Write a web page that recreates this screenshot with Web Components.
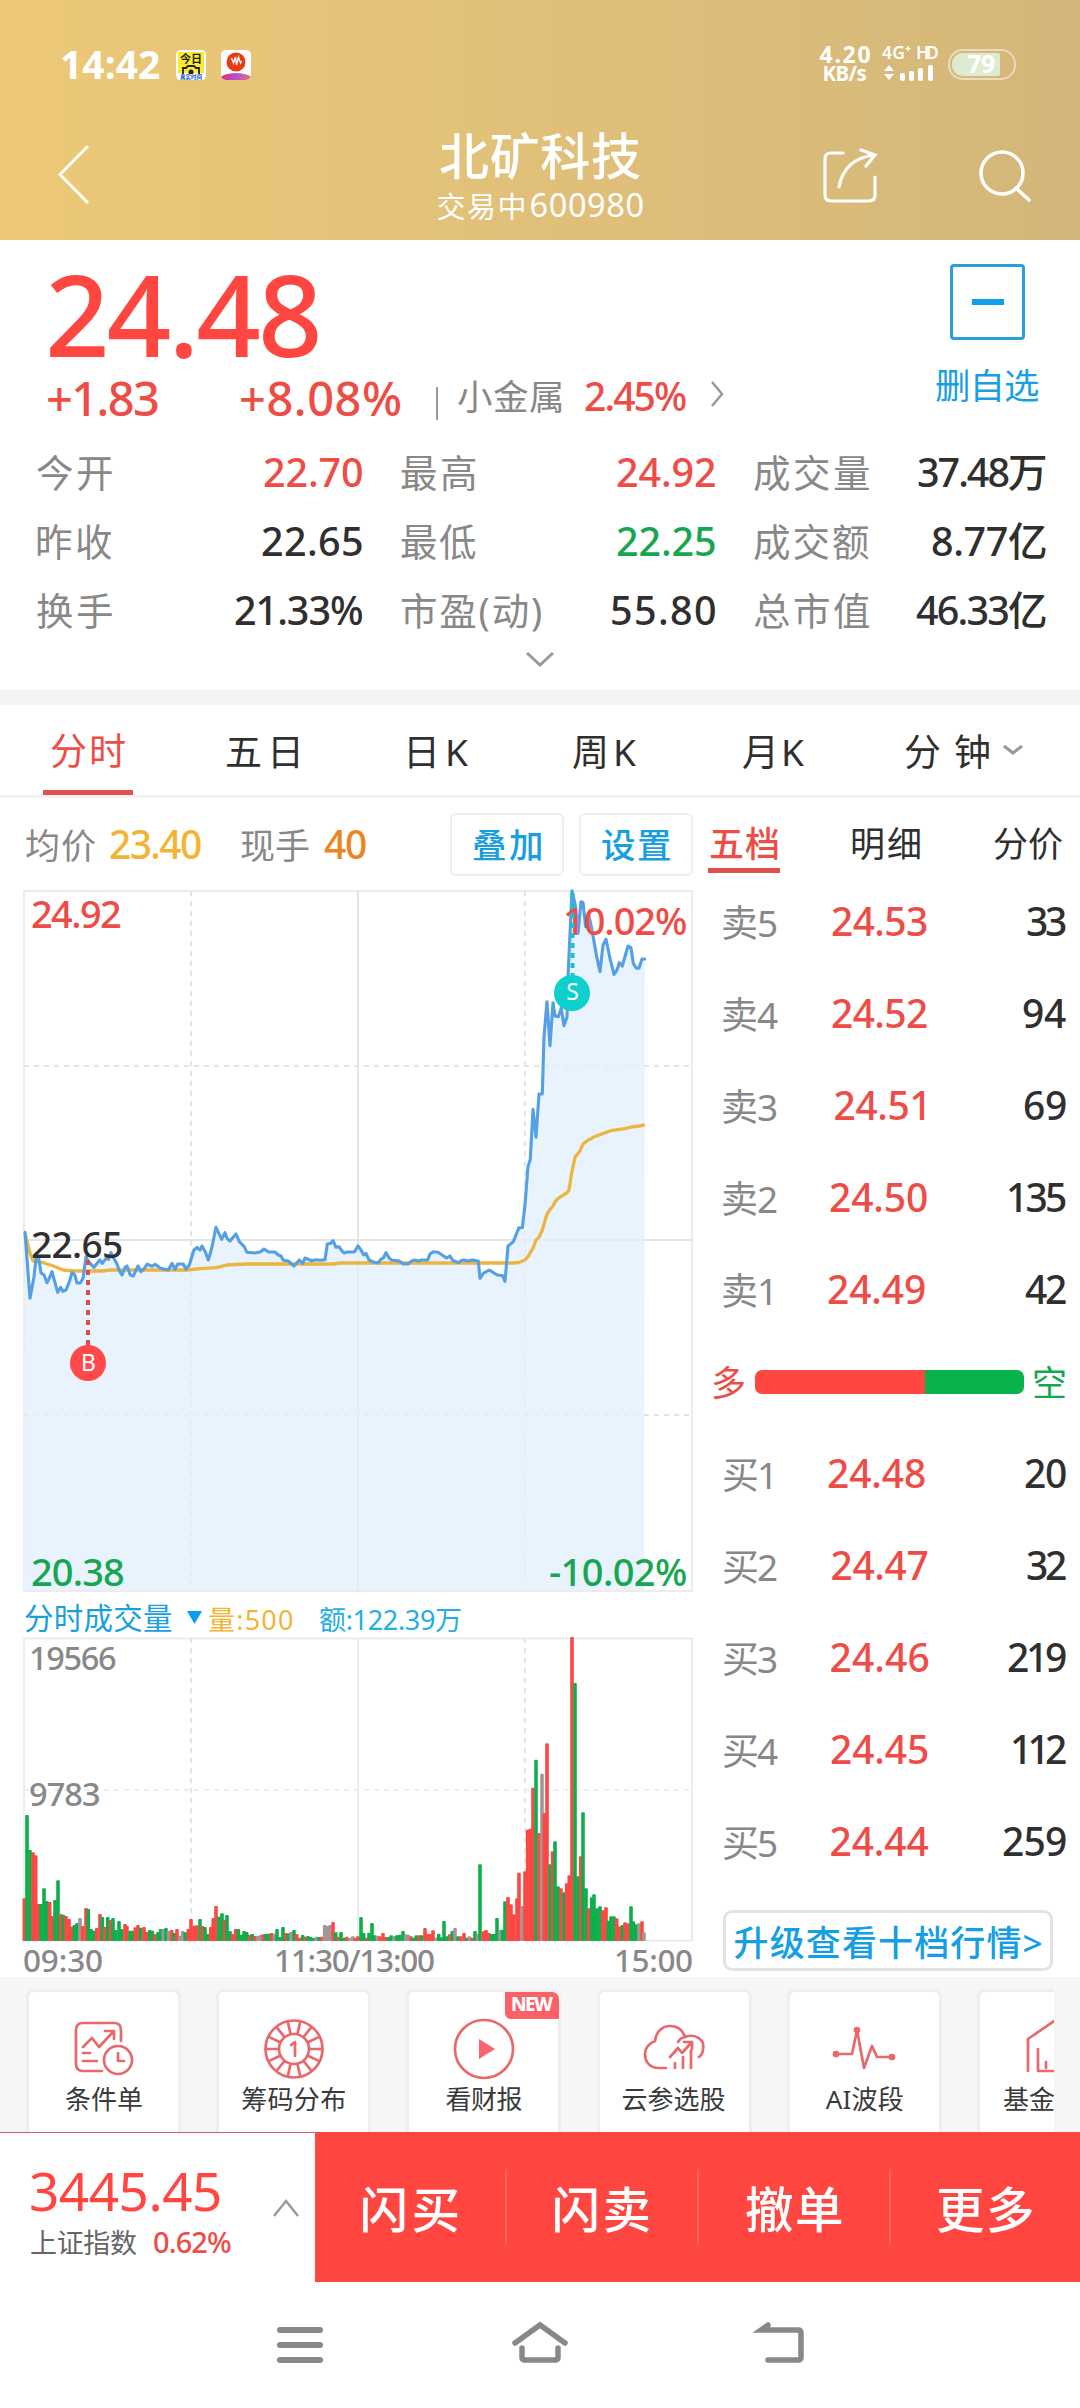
<!DOCTYPE html>
<html lang="zh-CN">
<head>
<meta charset="utf-8">
<title>北矿科技 600980</title>
<style>
html,body{margin:0;padding:0;background:#fff}
body{width:1080px;height:2408px;overflow:hidden;font-family:"Noto Sans","Noto Sans CJK SC",sans-serif}
</style>
</head>
<body>
<stock-page></stock-page>
<script>
const FONT='"Noto Sans","Noto Sans CJK SC",sans-serif';
const pen=document.createElement('canvas').getContext('2d');
const base=`*{box-sizing:border-box}svg{display:block;overflow:visible}.row{display:flex;align-items:center}.r{color:#ee4c46}.g{color:#17a650}.k{color:#2f2f2f}.y{color:#888}`;
function make(name,html){
  customElements.define(name,class extends HTMLElement{
    connectedCallback(){
      if(this.shadowRoot)return;
      const s=this.attachShadow({mode:'open'});
      s.innerHTML='<style>'+base+'</style>'+(typeof html==='function'?html(this):html);
    }
  });
}
/* One line of text whose inked width is w, at font size s and weight b. */
customElements.define('fit-text',class extends HTMLElement{
  connectedCallback(){
    if(this.shadowRoot)return;
    const t=this.textContent,n=[...t].length;
    const s=+this.getAttribute('s')||38,w=+this.getAttribute('w'),b=this.getAttribute('b')||(/^[+\-\d]/.test(t)?500:400);
    pen.font=`${b} ${s}px ${FONT}`;
    const m=pen.measureText(t),ink=m.actualBoundingBoxLeft+m.actualBoundingBoxRight;
    const ls=n>1?(w-ink)/(n-1):0;
    const up=/[\u4e00-\u9fff]/.test(t)?0:-.031*s;
    const ml=+this.getAttribute('ml')||0;
    this.attachShadow({mode:'open'}).innerHTML=`<style>:host{display:block;flex:none;width:${w}px;height:${s}px;margin-left:${ml}px;font:${b} ${s}px/${s}px ${FONT};white-space:pre}
    span{display:block;width:max-content;margin:${up}px 0 0 ${m.actualBoundingBoxLeft}px;letter-spacing:${ls}px}</style><span><slot></slot></span>`;
  }
});

make('status-bar',`<style>:host{display:flex;height:125px;padding:44px 64px 0 62px;color:#fff;align-items:flex-start}
.row{height:41px}.l{display:flex;gap:15px;margin-left:16px}.sp{flex:1}.net{display:flex;flex-direction:column;gap:0;width:52px;align-items:center}
.sig{width:57px;margin-left:10px;display:flex;flex-direction:column;gap:3px}
.bat{width:68px;height:31px;border:2px solid rgba(255,255,255,.5);border-radius:15px;margin-left:10px;padding:2px;display:flex}
.fill{flex:0 0 48px;border-radius:11px 2px 2px 11px;background:#dcebd1;display:flex;align-items:center;padding-left:15px}</style>
<div class="row"><fit-text s="39" w="98" b="700">14:42</fit-text>
<div class="l">
<svg width="30" height="30"><rect width="30" height="30" rx="5" fill="#fff"/><path d="M2 2h26v21H2z" fill="#ffe92e"/><text x="15" y="12.500" font-size="11" font-weight="700" text-anchor="middle" fill="#222" font-family="Noto Sans CJK SC">今日</text><path d="M7 24v-6h3l2-2h6l2 2h3v6" fill="none" stroke="#222" stroke-width="1.800"/><circle cx="15" cy="22" r="2.500" fill="#222"/><path d="M1 24h28v3q0 3-3 3H4q-3 0-3-3z" fill="#fff"/><text x="15" y="29" font-size="5.500" font-weight="700" text-anchor="middle" fill="#1959d1" font-family="Noto Sans CJK SC">真实时间</text></svg>
<svg width="30" height="30"><defs><linearGradient id="a" x2="1"><stop stop-color="#e8304f"/><stop offset=".5" stop-color="#b44ed8"/><stop offset="1" stop-color="#f0824a"/></linearGradient><clipPath id="c"><rect width="30" height="30" rx="5"/></clipPath></defs><g clip-path="url(#c)"><path fill="#fff" d="M0 0h30v30H0z"/><ellipse cx="15" cy="32" rx="19" ry="9" fill="url(#a)"/></g><circle cx="15" cy="12" r="9.500" fill="#e93a12"/><path d="M10.500 8l2 5 2-6 1 8 2-8 2 6 1-2" fill="none" stroke="#fff" stroke-width="1.400"/></svg>
</div></div><div class="sp"></div>
<div class="net"><fit-text s="23" w="51" b="700">4.20</fit-text><fit-text s="20.500" w="43" b="700" style="margin-top:-3px">KB/s</fit-text></div>
<div class="sig"><div class="row" style="height:17px;margin-top:1px"><fit-text s="17.500" w="29" b="600" ml="1">4G⁺</fit-text><fit-text s="17.500" w="21" b="600" ml="6">HD</fit-text></div>
<svg width="57" height="16" fill="#fff"><path d="M8 0l5 6H3zM8 15l5-6H3z"/><rect x="19" y="8" width="5" height="8" rx="2"/><rect x="28" y="6" width="5" height="10" rx="2"/><rect x="37" y="3" width="5" height="13" rx="2"/><rect x="47" y="0" width="5" height="16" rx="2"/></svg></div>
<div class="bat" style="margin-top:5px"><div class="fill"><fit-text s="25" w="28" b="700">79</fit-text></div></div>`);

make('title-bar',`<style>:host{display:grid;grid-template-columns:360px 1fr 360px;height:115px;color:#fff}
.mid{display:flex;flex-direction:column;align-items:center;padding-top:6px;gap:9px}.end{display:flex;padding:24px 0 0 102px;gap:103px}.beg{padding:20px 0 0 58px}</style>
<div class="beg"><svg width="32" height="60" fill="none" stroke="#fff" stroke-width="3"><path d="M30 1L2 29.500 30 58"/></svg></div>
<div class="mid"><fit-text s="50" w="200" b="500">北矿科技</fit-text><div class="row"><fit-text s="29" w="87">交易中</fit-text><fit-text s="32.500" w="112" ml="6" b="400">600980</fit-text></div></div>
<div class="end"><svg width="54" height="54" fill="none" stroke="#fff" stroke-width="3.200" stroke-linecap="round"><path d="M21 4H9Q3 4 3 10v36q0 6 6 6h38q6 0 6-6V28"/><path d="M17 38Q22 10 52 6M39 1l14 5-9 11"/></svg>
<svg width="54" height="54" fill="none" stroke="#fff" stroke-width="3.500" stroke-linecap="round"><circle cx="23" cy="24" r="21"/><path d="M37 39l13 12"/></svg></div>`);

make('stat-cell',e=>`<style>:host{display:flex;justify-content:space-between;align-items:center;height:69px}</style><fit-text class="y" s="37.500" w="${e.getAttribute('lw')}">${e.getAttribute('label')}</fit-text><fit-text class="${e.getAttribute('c')||'k'}" s="39.500" w="${e.getAttribute('vw')}" style="margin-top:${/[万亿]/.test(e.getAttribute('value'))?0:3}px">${e.getAttribute('value')}</fit-text>`);

make('quote-panel',`<style>:host{display:block;height:450px}.top{display:flex;justify-content:space-between;height:198px;padding:0 41px 0 48px}
.big{color:#ff4640;padding:20px 0 0 2px}.chg{height:54px}.fav{display:flex;flex-direction:column;align-items:center;color:#189fe0;padding-top:24px;width:103px;gap:28px}
.box{width:75px;height:76px;border:3px solid #2a9fda;border-radius:4px;display:grid;place-items:center}.box i{width:32px;height:6px;background:#12a0ea}
.stats{display:grid;grid-template-columns:325px 314px 292px;column-gap:39px;padding-left:37px}.more{margin:6px 0 0 526px}</style>
<div class="top"><div><div class="big"><fit-text s="113" w="268" b="500">24.48</fit-text></div>
<div class="row chg r"><fit-text s="47" w="110" style="margin-top:6px">+1.83</fit-text><fit-text s="47" w="159" ml="83" style="margin-top:6px">+8.08%</fit-text><div style="width:2px;height:33px;background:#999;margin:14px 20px 0 36px"></div><fit-text class="y" s="35.500" w="104">小金属</fit-text><fit-text s="39" w="101" ml="23">2.45%</fit-text>
<svg style="margin-left:24px;margin-top:-5px" width="14" height="26" fill="none" stroke="#999" stroke-width="2.500"><path d="M2 1l10 12L2 25"/></svg></div></div>
<div class="fav"><div class="box"><i></i></div><fit-text s="35.500" w="103">删自选</fit-text></div></div>
<div class="stats">
<stat-cell label="今开" lw="75" value="22.70" vw="98" c="r"></stat-cell><stat-cell label="最高" lw="75" value="24.92" vw="98" c="r"></stat-cell><stat-cell label="成交量" lw="115" value="37.48万" vw="128"></stat-cell>
<stat-cell label="昨收" lw="75" value="22.65" vw="100"></stat-cell><stat-cell label="最低" lw="75" value="22.25" vw="98" c="g"></stat-cell><stat-cell label="成交额" lw="115" value="8.77亿" vw="114"></stat-cell>
<stat-cell label="换手" lw="75" value="21.33%" vw="127"></stat-cell><stat-cell label="市盈(动)" lw="140" value="55.80" vw="103"></stat-cell><stat-cell label="总市值" lw="115" value="46.33亿" vw="130"></stat-cell></div>
<svg class="more" width="28" height="16" fill="none" stroke="#999" stroke-width="3"><path d="M1 2l13 12L27 2"/></svg>`);

make('period-tabs',`<style>:host{display:flex;align-items:center;height:108px;border-top:15px solid #f4f4f4;border-bottom:3px solid #f3f3f3;color:#2f2f2f}
.on{color:#ee4c46;width:90px;height:90px;margin-left:43px;padding:27px 8px 0;border-bottom:5px solid #e2514e}
.rest{display:flex;align-items:center;padding-top:2px}</style>
<div class="on"><fit-text s="37" w="74">分时</fit-text></div><div class="rest"><fit-text s="37" w="71" ml="94">五日</fit-text><fit-text s="37" w="59" ml="111">日K</fit-text><fit-text s="37" w="63" ml="105">周K</fit-text><fit-text s="37" w="61" ml="107">月K</fit-text><fit-text s="37" w="84" ml="101">分 钟</fit-text>
<svg style="margin-left:14px;margin-top:-3px" width="20" height="12" fill="none" stroke="#999" stroke-width="3"><path d="M1 2l9 7 9-7"/></svg></div>`);

/* Price samples: each run holds an origin and offsets in thirds of a pixel. */
const price=[[0,1180,'75,157 90,355 102,290 108,235 116,235 123,278 132,285 141,308 148,295 156,275 165,308 173,337 182,322 188,334 198,330 207,308 216,278 224,284 231,309 241,309 249,295 258,230 265,245 282,262 299,240 307,250 318,235 326,238 333,218 341,235 350,250 358,272 366,285 375,262 381,258 391,285 400,288 414,258 423,275 433,265 441,253 457,259 465,253 482,265 505,270 516,250 525,268 533,252 550,252 558,268 568,255 582,210 591,202 600,210 606,198 616,215 625,240 635,205 648,142 665,178 675,158 681,175 690,183 708,162 718,185 733,200 741,217 765,219 782,215 792,207 806,216 825,216 835,225 843,228 850,241 865,243 882,258'],
[160,1180,'418,240 428,250 435,234 455,242 470,239 480,241 495,239 502,192 512,190 519,182 528,202 537,200 545,212 552,219 562,216 583,216 594,198 603,210 611,225 618,220 627,240 645,248 655,248 662,238 670,234 678,218 686,232 694,240 718,243 730,252 744,252 755,243 765,240 775,243 785,240 803,240 810,222 820,215 834,217 850,227 860,234 870,228 878,241 895,248 903,242 912,240 925,243 937,240 955,243 960,295 970,280 988,270 1010,284 1028,287 1035,304'],
[350,880,'474,1098 490,1085 507,1043 517,1043 525,975 534,860 541,838 549,688 558,772 567,642 577,642 582,470 591,365 600,497 609,368 615,408 625,410 634,385 642,437 651,410 654,290 666,32 676,75 684,160 693,65 699,68 707,140 717,108 726,150 740,230 750,275 759,195 768,178 780,235 792,283 801,270 808,248 817,258 834,198 843,203 850,250 859,265 867,265 876,237 884,237']];
const avg=[[0,1180,'75,160 90,220 99,243 130,248 160,258 190,270 220,273 310,273 330,270 560,270 600,266 650,263 680,255 740,252 1000,252 1020,249'],
[350,880,'0,1149 490,1149 505,1148 525,1140 534,1130 541,1118 549,1105 558,1080 567,1072 576,1052 583,1030 591,1002 601,988 609,978 615,965 625,955 651,938 657,930 664,885 675,832 690,812 699,792 715,780 724,776 733,770 765,758 782,752 825,746 843,741 867,738 884,735']];
const trace=a=>a.flatMap(([x,y,t])=>t.split(' ').map(p=>{const[u,v]=p.split(',');return(x+u/3).toFixed(1)+','+(y+v/3).toFixed(1)})).join(' ');
make('price-chart',()=>`<style>:host{display:block;position:relative;width:696px;height:705px}fit-text{position:absolute}</style>
<svg width="696" height="705" viewBox="0 889 696 705" fill="none">
<path d="M24 891H692V1591H24z" stroke="#e6e6e6" stroke-width="1.500"/>
<polygon points="${trace(price)} 644,1590 24,1590" fill="#e8f3fe"/>
<g stroke="#e4e4e6" stroke-width="2"><path d="M358 891V1591M24 1240H692"/><path d="M191 891V1591M525 891V1591M24 1066H692M24 1415H692" stroke-dasharray="5 5"/></g>
<polygon points="${trace(price)} 644,1590 24,1590" fill="#e8f3fe" opacity=".5"/>
<polyline points="${trace(avg)}" stroke="#ecb440" stroke-width="3.300" stroke-linejoin="round"/>
<polyline points="${trace(price)}" stroke="#549fe6" stroke-width="3.100" stroke-linejoin="round" stroke-linecap="round"/></svg>
<fit-text class="r" s="38" w="88" style="left:32px;top:6px">24.92</fit-text><fit-text class="r" s="38" w="120" style="left:566px;top:13px">10.02%</fit-text>
<fit-text class="k" s="37" w="90" style="left:32px;top:337px">22.65</fit-text><fit-text class="g" s="38" w="91" style="left:32px;top:664px">20.38</fit-text><fit-text class="g" s="38" w="136" style="left:550px;top:664px">-10.02%</fit-text>
<svg style="position:absolute;left:0;top:0" width="696" height="705" viewBox="0 889 696 705"><path d="M88 1260V1346" stroke="#dc4e4c" stroke-width="4" stroke-dasharray="5 5"/><path d="M572.500 893V976" stroke="#13c6cd" stroke-width="4" stroke-dasharray="5 5"/>
<circle cx="88" cy="1363" r="18" fill="#ff4a49"/><circle cx="572" cy="993" r="18" fill="#0ccfce"/><g fill="#fff" font-size="23" text-anchor="middle" font-family="Noto Sans"><text x="88.500" y="1370.500">B</text><text x="572.500" y="1000">S</text></g></svg>`);

/* Volume bars: x, top (thirds of a pixel), colour. */
const vol1='73 325r81 75g90 180g99 187r107 196r115 342r123 342g132 295g140 333g149 336r157 378r165 330g174 271g182 372r190 374g198 378r207 387r215 410r223 405g231 399g240 384y248 408r258 354r265 357g273 417g281 422g290 414r300 372r307 381g315 411r323 381g332 390r339 384g347 420g357 393g365 417g375 402r381 408r390 422g398 422g406 412r414 405r422 413g432 411r440 426r449 420g457 422g465 432r474 426g482 417g490 417y498 414g506 422y515 420r523 429g531 417r540 437y548 423y556 427g565 417r573 387r582 407r590 406r600 387g607 408r615 411g623 432g632 411r640 384r648 348r657 380g666 370g674 390r681 375g690 423g698 432r707 417r715 417g724 434g732 423g740 426g749 434r757 432g765 438r773 438y782 435y790 433r798 431g807 431g815 429r823 431y831 417g840 441g849 411g857 429r865 430g873 426y882 420g890 432r899 443r908 435g916 440r924 438g932 441g940 444g949 440y957 441g965 440r974 405y982 408y990 405y999 396r1007 427g1015 440r1023 426g1031 443g1040 440r1048 444y';
const vol2='8 948y16 953r24 948r33 890g41 938g49 952r57 937g66 908g74 945g82 946y90 948r99 938r107 950r115 950g124 945g132 948y140 945g149 943g159 932g167 942y175 943y183 948r191 952g199 945g207 945r215 945g225 923r233 941r241 941r249 930r258 952y266 940g274 951g282 902g290 948g299 942r307 932g315 923y324 948g332 948r342 938r350 952g358 948y366 952r375 932g383 940y390 732g400 933r408 929r416 938r425 941g433 941g441 893g450 928y458 928g465 843g474 830r483 852r491 882r501 834r507 757r516 857y525 753r533 628r541 625r549 502r558 418g567 638r576 460y583 578r591 369r600 732g608 693r615 663g624 798g633 804r642 816g650 789r658 765r666 50r675 188g684 768g692 708r699 576g708 804g716 864r725 831g732 822g741 864g750 858g759 870r768 861r775 901g783 888g792 888g800 894r808 918r817 914g825 906r834 909r843 858g850 903g859 912g867 909y876 903r882 936y';
const bars=(t,x0,b)=>[...t.matchAll(/(\d+) (\d+)([rgy])/g)].map(m=>{const h=(b-m[2])/3;return`<rect x="${(x0+m[1]/3-1.8).toFixed(1)}" y="${(1941-h).toFixed(1)}" width="3.600" height="${h.toFixed(1)}" rx="1" fill="${{r:'#fb4843',g:'#0fae4d',y:'#a29698'}[m[3]]}"/>`}).join('');
make('volume-chart',()=>`<style>:host{display:block;position:relative;width:696px;height:310px}fit-text{position:absolute}</style>
<svg width="696" height="310" viewBox="0 1635 696 310" fill="none"><path d="M24 1638.500H692V1940.500H24z" stroke="#e6e6e6" stroke-width="1.500"/><path d="M358 1638V1941" stroke="#ededee" stroke-width="2"/><path d="M191 1638V1941M525 1638V1941" stroke="#e4e4e4" stroke-width="2" stroke-dasharray="5 5"/><path d="M24 1790H692" stroke="#ededed" stroke-width="2" stroke-dasharray="5 5"/>${bars(vol1,0,453)}${bars(vol2,350,962)}</svg>
<fit-text class="y" s="32.500" w="85" style="left:31px;top:8px">19566</fit-text><fit-text class="y" s="32.500" w="69" style="left:30px;top:144px">9783</fit-text>`);

make('chart-panel',`<style>:host{display:block;width:696px}.head{height:79px;padding:15px 0 0 26px;align-items:flex-start}.head .in{height:64px;display:flex;align-items:center}
.btn{width:114px;height:63px;border:2px solid #eee;border-radius:6px;display:grid;place-items:center;padding-top:1px;color:#189fe0}
.vh{height:46px;padding-left:25px;padding-top:2px}.ax{justify-content:space-between;padding:0 4px 0 24px;height:32px}</style>
<div class="row head"><div class="in" style="width:424px"><fit-text class="y" s="35" w="69">均价</fit-text><fit-text s="39" w="91" ml="15" style="color:#f2b431">23.40</fit-text><fit-text class="y" s="35" w="68" ml="40">现手</fit-text><fit-text s="39" w="42" ml="15" style="color:#ee8420">40</fit-text></div><div class="btn"><fit-text s="34.500" w="68" b="500">叠加</fit-text></div><div class="btn" style="margin-left:15px"><fit-text s="34.500" w="68" b="500">设置</fit-text></div></div>
<price-chart style="margin-top:12px"></price-chart>
<div class="row vh" style="color:#189fe0"><fit-text s="29.500" w="147">分时成交量</fit-text><svg style="margin:-2px 0 0 15px" width="15" height="13"><path d="M0 0h15L7.500 13z" fill="#049ff5"/></svg><fit-text s="27" w="84" ml="7" style="color:#f0b437;margin-top:2px">量:500</fit-text><fit-text s="27" w="141" ml="27" style="color:#22b0e2;margin-top:2px">额:122.39万</fit-text></div>
<volume-chart style="margin-top:-5px"></volume-chart>
<div class="row ax y"><fit-text s="31.500" w="78">09:30</fit-text><fit-text s="31.500" w="158" ml="-8">11:30/13:00</fit-text><fit-text s="31.500" w="76">15:00</fit-text></div>`);

make('order-row',e=>{const a=e.getAttribute('d').split('|');return`<style>:host{display:grid;grid-template-columns:100px 113px 1fr;align-items:center;height:92px;padding:0 14px 0 27px}.q{justify-self:end}.p{justify-self:center}</style>
<fit-text class="y" s="37" w="${a[1]}">${a[0]}</fit-text><fit-text class="p r" s="39" w="${a[3]}" style="margin-right:${a[6]||0}px">${a[2]}</fit-text><fit-text class="q k" s="39" w="${a[5]}">${a[4]}</fit-text>`});
make('order-book',`<style>:host{display:block;flex:1}.tabs{height:78px;padding:8px 0 0 12px;align-items:flex-start}.on{width:72px;height:67px;padding:20px 2px 0;border-bottom:5px solid #dd504d}
.bal{height:92px;padding:0 14px 0 17px}.bar{width:269px;height:24px;border-radius:7px;margin:0 10px 0 11px;background:linear-gradient(90deg,#ff4641 170px,#08b34c 170px)}
.up{width:330px;height:61px;margin:22px 0 0 27px;border:3px solid #e3e3e3;border-radius:9px;display:grid;place-items:center;padding-top:3px;color:#149fe2}</style>
<div class="row tabs"><div class="on r"><fit-text s="35" w="68" b="500">五档</fit-text></div><div class="row k" style="padding-top:20px"><fit-text s="35" w="68" ml="72">明细</fit-text><fit-text s="35" w="68" ml="74">分价</fit-text></div></div>
<order-row d="卖5|54|24.53|95|33|39"></order-row><order-row d="卖4|55|24.52|95|94|43"></order-row><order-row d="卖3|54|24.51|90|69|42"></order-row><order-row d="卖2|54|24.50|97|135|57|2"></order-row><order-row d="卖1|48|24.49|97|42|41|6"></order-row>
<div class="row bal"><fit-text class="r" s="35" w="31">多</fit-text><div class="bar"></div><fit-text class="g" s="35" w="32">空</fit-text></div>
<order-row d="买1|48|24.48|97|20|41|6"></order-row><order-row d="买2|54|24.47|96|32|39"></order-row><order-row d="买3|54|24.46|98|219|58"></order-row><order-row d="买4|55|24.45|97|112|53"></order-row><order-row d="买5|54|24.44|98|259|63"></order-row>
<div class="up"><fit-text s="35" w="307" b="500">升级查看十档行情&gt;</fit-text></div>`);

let spokes='';for(let i=0;i<14;i++){const a=(i+.5)*Math.PI/7,c=Math.cos(a-Math.PI/2),s=Math.sin(a-Math.PI/2);spokes+=`M${30+16*c} ${30+16*s}L${30+28*c} ${30+28*s}`}
const icons={
order:'<path d="M28 52H9q-7 0-7-7V11q0-7 7-7h31q7 0 7 7v11M9 28l9-9 7 9 14-15M31 12h9v8M9 34h7M9 42h14"/><circle cx="44" cy="41" r="14"/><path d="M44 34v8h6"/>',
chip:`<circle cx="30" cy="30" r="28.500"/><circle cx="30" cy="30" r="15"/><path d="${spokes}"/><path d="M27 26l4-3v14"/>`,
play:'<circle cx="30" cy="30" r="29"/><path d="M25 20l16 10-16 10z" fill="#f9656a" stroke="none"/>',
cloud:'<path d="M22 49h-7C4 49 1 41 1 35c0-8 5-11 10-13 1-10 8-15 15-15 8 0 13 5 15 11 11-4 20 3 18 12 0 4-1 6-4 8M41 18q-5 1-7 5M26 38l8-9 4 5 10-11M40 23h8v7M31 44v5M39 38v11M47 31v18"/>',
pulse:'<path d="M2 35h16l5-24 7 38 8-22 5 11h15"/><g fill="#f9656a"><circle cx="2" cy="35" r="2"/><circle cx="23" cy="11" r="2"/><circle cx="58" cy="38" r="2"/></g>',
house:'<path d="M4 52V20L30 2l26 18v32M14 30v22h32V30M22 43v6"/>'};
make('tool-card',e=>`<style>:host{display:flex;flex:none;flex-direction:column;align-items:center;width:155px;height:143px;border:3px solid #eee;border-bottom:0;border-radius:8px 8px 0 0;background:#fff;padding-top:27px;gap:7px;color:#3a3a3a;position:relative}
::slotted(*){position:absolute;right:-1px;top:0}</style><svg width="60" height="60" fill="none" stroke="#e8686b" stroke-width="2.700" stroke-linecap="round" stroke-linejoin="round">${icons[e.getAttribute('icon')]}</svg><fit-text s="26" w="${e.getAttribute('w')}">${e.getAttribute('label')}</fit-text><slot></slot>`);
make('new-badge',`<style>:host{display:flex;align-items:center;justify-content:center;width:54px;height:27px;background:#fc6168;color:#fff;border-radius:0 7px 0 6px}</style><fit-text s="19" w="41" b="800">NEW</fit-text>`);
make('tool-strip',`<style>:host{display:block;height:155px;background:#f6f6f6;padding-right:26px}div{display:flex;gap:35.200px;height:155px;padding:12px 0 0 26px;overflow:hidden}</style>
<div><tool-card icon="order" label="条件单" w="77"></tool-card><tool-card icon="chip" label="筹码分布" w="103"></tool-card><tool-card icon="play" label="看财报" w="77"><new-badge></new-badge></tool-card><tool-card icon="cloud" label="云参选股" w="103"></tool-card><tool-card icon="pulse" label="AI波段" w="77"></tool-card><tool-card icon="house" label="基金定投" w="103"></tool-card></div>`);

make('trade-bar',`<style>:host{display:flex;height:150px}.idx{flex:none;width:315px;border-top:1px solid #bf6464;padding:33px 15px 0 31px;display:flex;justify-content:space-between}
.act{flex:1;display:grid;grid-template-columns:190px 192px 192px 191px;background:#ff4641;color:#fff;align-items:center}.act div{display:grid;place-items:center;height:76px;padding-top:4px}.act div+div{border-left:2px solid #ff635d}</style>
<div class="idx"><div style="color:#ff4640"><fit-text s="53" w="189" b="450">3445.45</fit-text><div class="row" style="margin-top:11px"><fit-text s="27" w="106" style="color:#666">上证指数</fit-text><fit-text class="r" s="29" w="77" ml="17">0.62%</fit-text></div></div>
<svg style="margin-top:33px" width="27" height="18" fill="none" stroke="#999" stroke-width="2.500"><path d="M1 17L13 2l12 15"/></svg></div>
<div class="act"><div><fit-text s="48.500" w="95" b="500">闪买</fit-text></div><div><fit-text s="48.500" w="95" b="500">闪卖</fit-text></div><div><fit-text s="48.500" w="96" b="500">撤单</fit-text></div><div><fit-text s="48.500" w="95" b="500">更多</fit-text></div></div>`);
make('nav-bar',`<style>:host{display:flex;height:126px;padding:37px 0 0 277px}</style>
<svg width="46" height="50" fill="none" stroke="#888" stroke-width="6" stroke-linecap="round"><path d="M3 11h40M3 26h40M3 41h40"/></svg>
<svg style="margin-left:188px" width="58" height="50" fill="none" stroke="#888" stroke-width="5.500" stroke-linecap="round"><path d="M4 24L29 6l25 18M11 29v9q0 3 3 3h30q3 0 3-3v-9"/></svg>
<svg style="margin-left:187px" width="50" height="50" fill="none" stroke="#888" stroke-width="5.500" stroke-linecap="round"><path d="M12 6L5 11h37q3 0 3 3v24q0 3-3 3H12"/></svg>`);

make('stock-page',`<style>:host{display:flex;flex-direction:column;width:1080px;height:2408px;background:#fff;font-family:${FONT}}
header{height:240px;background:linear-gradient(90deg,#edc878,#dfbf79 55%,#d3b67a)}main{display:flex;height:1179px}</style>
<header><status-bar></status-bar><title-bar></title-bar></header><quote-panel></quote-panel><period-tabs></period-tabs>
<main><chart-panel></chart-panel><order-book></order-book></main><tool-strip></tool-strip><trade-bar></trade-bar><nav-bar></nav-bar>`);
</script>
</body>
</html>
